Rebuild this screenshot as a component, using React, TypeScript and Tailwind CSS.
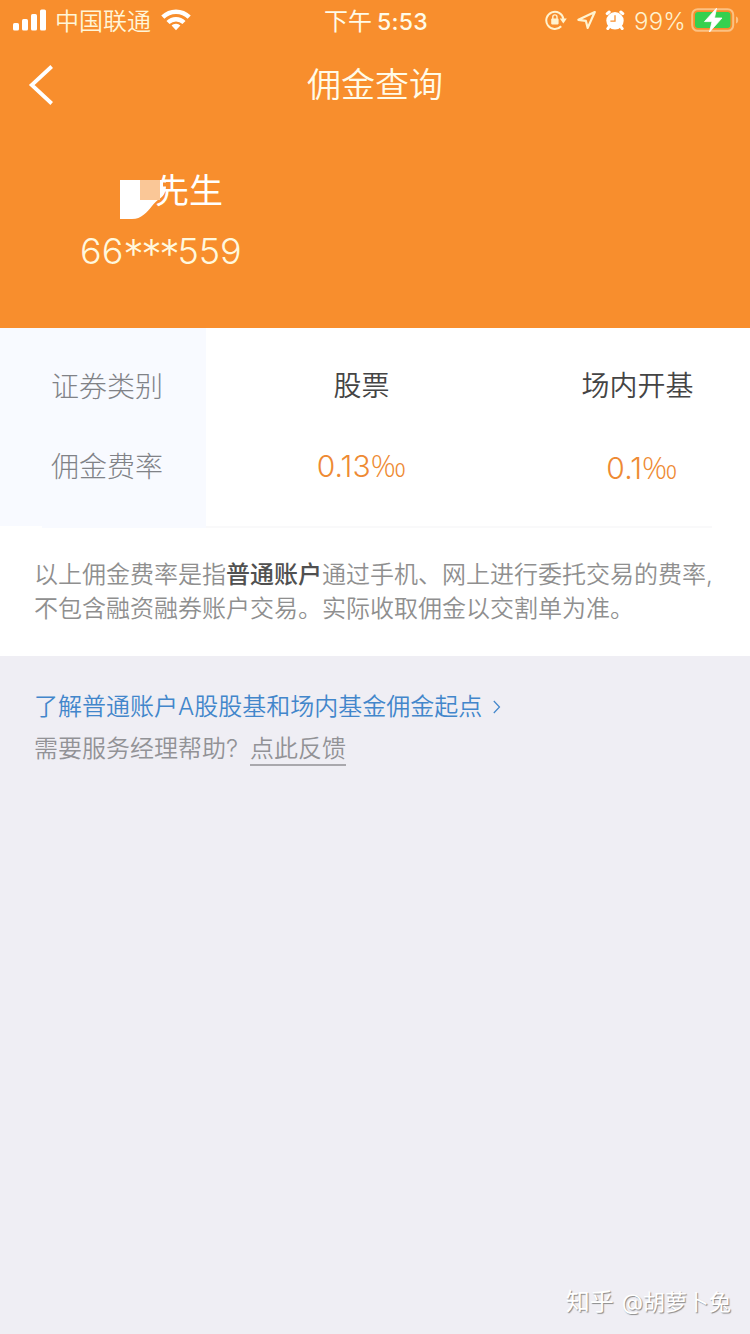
import React from "react";

function StatusBar() {
  return (
    <div className="flex h-10 items-center text-[24px] leading-10">
      <div className="flex flex-1 items-center pl-[13px]">
        <svg width="34" height="22" viewBox="0 0 34 22" fill="currentColor">
          <rect x="0" y="14" width="6" height="7.5" rx="1.6" />
          <rect x="9" y="10" width="6" height="11.5" rx="1.6" />
          <rect x="18" y="5" width="6" height="16.5" rx="1.6" />
          <rect x="27" y="0.5" width="6" height="21" rx="1.6" />
        </svg>
        <span className="ml-2 pt-[3px] font-[350] text-[#fff6d8]">中国联通</span>
        <svg className="ml-[10px]" width="30" height="22" viewBox="0 0 30 22" fill="none" stroke="currentColor" strokeWidth="4.4">
          <path d="M1.8 8.1a18.8 18.8 0 0 1 26.4 0" />
          <path d="M7 13.5a11.6 11.6 0 0 1 16 0" />
          <path d="M15 14.8c-1.9 0-3.3.7-4.4 1.8L15 21.3l4.4-4.7A6 6 0 0 0 15 14.8z" fill="currentColor" stroke="none" />
        </svg>
      </div>
      <div className="flex shrink-0 pt-[3px] text-[#fffbe8]">
        <span>下午</span>
        <span className="ml-[5px] text-[23px] font-medium tracking-[0.3px]">5:53</span>
      </div>
      <div className="flex flex-1 items-center justify-end pr-[11px] text-[#fff3cf]">
        <svg width="22" height="20" viewBox="0 0 22 20" fill="none" stroke="currentColor" strokeWidth="2">
          <path d="M16.2 16.2A8.6 8.6 0 1 1 18.4 9" />
          <path d="M14.8 8.6h7l-3.5 4.8z" fill="currentColor" stroke="none" />
          <rect x="6.2" y="8.6" width="7.4" height="5.8" rx="0.8" fill="currentColor" stroke="none" />
          <path d="M7.8 9V7a2.1 2.1 0 0 1 4.2 0v2" strokeWidth="1.4" />
        </svg>
        <svg className="ml-[10px]" width="20" height="20" viewBox="0 0 20 20" fill="none" stroke="currentColor" strokeWidth="2.2" strokeLinejoin="round">
          <path d="M17.8 2 1.4 9.8l7.500 1.100 1.800 7z" />
        </svg>
        <svg className="ml-[8px]" width="20" height="20" viewBox="0 0 20 20">
          <circle cx="10" cy="10.8" r="8.7" fill="white" />
          <path d="M2.2 3.6 4.2 2M17.8 3.6 15.8 2M4.3 16.5 2.8 18.6M15.7 16.5l1.500 2.100" stroke="white" strokeWidth="3" strokeLinecap="round" />
          <path d="M10 5.200v6H5.400" fill="none" stroke="#f88e2d" strokeWidth="1.300" />
        </svg>
        <span className="ml-[9px] pt-[3px] text-[24px] font-light tracking-[0.2px]">99%</span>
        <svg className="ml-[5px]" width="48" height="26" viewBox="0 0 48 26">
          <rect x="1.2" y="2.2" width="41" height="21.6" rx="5.5" fill="none" stroke="#fcc182" strokeWidth="2" />
          <rect x="4" y="5" width="35.4" height="16" rx="3" fill="#36d04f" />
          <path d="M45 9.500c1.600.5 2.200 1.800 2.200 3.500S46.600 16 45 16.500z" fill="#fcc182" />
          <path d="M25.500 1.200 13.500 14.600h7.500L18.500 25 31 11h-7.500z" fill="white" stroke="white" strokeWidth="0.8" strokeLinejoin="round" />
        </svg>
      </div>
    </div>
  );
}

function NavBar() {
  return (
    <div className="grid h-[90px] grid-cols-[1fr_auto_1fr] items-center">
      <svg className="ml-7" width="28" height="42" viewBox="0 0 28 42" fill="none" stroke="currentColor" strokeWidth="3.8">
        <path d="M23.7 2.5 3.7 21l20 18.500" />
      </svg>
      <h1 className="text-[34px] leading-[88px] font-[350] text-[#fffbe8]">佣金查询</h1>
    </div>
  );
}

function Customer() {
  return (
    <div className="flex h-[198px] flex-col pt-[37px] pl-20">
      <div className="flex h-[46px] items-start pl-10">
        <svg className="relative z-10" width="47" height="52" viewBox="0 0 47 52">
          <path d="M34 0h7v6h1v5h-2v4h-6z" fill="#f88e2d" />
          <path d="M0 13h46v5c0 6-1.500 10.500-6 13.500C33 36 30 43 24 47.500 20 50.500 17 52 12 52H0z" fill="white" />
          <path d="M43 15.500h4v4h-4z" fill="#f88e2d" />
          <rect x="20" y="13" width="20" height="20" fill="#fac797" />
        </svg>
        <span className="-ml-[12px] pt-px text-[34px] leading-[46px]">先生</span>
      </div>
      <div className="mt-[14px] flex text-[36px] leading-[48px] font-light text-[#fff8de]">
        <span>66</span>
        <span className="pt-[3px] text-[41px] tracking-[-2.5px]">***</span>
        <span>559</span>
      </div>
    </div>
  );
}

function Rate({ value }: { value: string }) {
  return (
    <span className="text-[30px] font-light tracking-[0.1px] text-[#ee8a33]">
      {value}
      <span className="font-['Open_Sans','Noto_Sans',sans-serif] text-[31px]">‰</span>
    </span>
  );
}

function Rates() {
  return (
    <div className="grid h-[200px] grid-cols-[206px_311px_233px] text-center text-[28px]">
      <div className="flex flex-col font-light text-[#808287]">
        <div className="h-[198px] bg-[#f8faff] pt-[39px] pl-2">
          <div className="leading-10">证券类别</div>
          <div className="mt-10 leading-10">佣金费率</div>
        </div>
        <div className="ml-[42px] h-0.5 bg-[#f8faff]" />
      </div>
      <div className="flex flex-col border-b-2 border-[#f9f9fa] pt-[38px] font-[350] text-[#444444]">
        <div className="leading-10">股票</div>
        <div className="mt-[39px] leading-10">
          <Rate value="0.13" />
        </div>
      </div>
      <div className="mr-[38px] flex flex-col border-b-2 border-[#f9f9fa] pt-[38px] font-[350] text-[#444444]">
        <div className="-mr-[46px] leading-10">场内开基</div>
        <div className="mt-[41px] -mr-[55px] leading-10">
          <Rate value="0.1" />
        </div>
      </div>
    </div>
  );
}

export default function App() {
  return (
    <div className="flex h-[1334px] w-[750px] flex-col overflow-hidden bg-[#efeef4] font-['Inter','Noto_Sans_CJK_SC',sans-serif]">
      <header className="h-[328px] shrink-0 bg-[#f88e2d] text-white">
        <StatusBar />
        <NavBar />
        <Customer />
      </header>
      <section className="h-[328px] shrink-0 bg-white">
        <Rates />
        <p className="pt-[30px] pl-[34px] text-[24px] leading-[34px] font-[350] whitespace-nowrap text-[#8f8f8f]">
          以上佣金费率是指<b className="font-medium text-[#505050]">普通账户</b>通过手机、网上进行委托交易的费率,
          <br />
          不包含融资融券账户交易。实际收取佣金以交割单为准。
        </p>
      </section>
      <section className="flex-1 pt-[34px] pl-[34px] text-[24px] font-[350] text-[#929296]">
        <a className="flex items-center leading-[34px] text-[#4286cb]">
          了解普通账户A股股基和场内基金佣金起点
          <svg className="mb-px ml-[10px]" width="10" height="14" viewBox="0 0 10 14" fill="none" stroke="currentColor" strokeWidth="1.2">
            <path d="M1.8 1 7.5 7l-5.700 6" />
          </svg>
        </a>
        <div className="mt-[7px] flex leading-[35px]">
          <span>需要服务经理帮助?</span>
          <a className="ml-[12px] h-[35px] border-b-2 border-[#a9a8ad]">点此反馈</a>
        </div>
      </section>
      <footer className="flex h-[52px] shrink-0 justify-end gap-2 pr-[19px] text-[22px] leading-[40px] text-white [text-shadow:1px_1px_1px_#888]">
        <span className="text-[24px]">知乎</span>
        <span>@胡萝卜兔</span>
      </footer>
    </div>
  );
}
